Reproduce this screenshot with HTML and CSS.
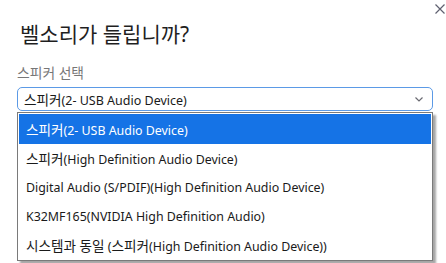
FILE: index.html
```html
<!DOCTYPE html>
<html lang="ko">
<head>
    <meta charset="UTF-8">
    <meta name="viewport" content="width=device-width, initial-scale=1.0">
    <title>벨소리가 들립니까?</title>

    <link rel="stylesheet" href="styles.css">
</head>
<body>
    <div class="dialog">
        <div class="topbar">
            <button class="close" aria-label="닫기">
                <svg width="10" height="10" viewBox="0 0 10 10">
                    <path d="M0.5 0.5 L9.5 9.5 M9.5 0.5 L0.5 9.5" stroke="#5f6070" stroke-width="1.2" fill="none"/>
                </svg>
            </button>
        </div>

        <h1 class="title">벨소리가 들립니까?</h1>

        <div class="label">스피커 선택</div>

        <div class="select">
            <span class="select-text"><span class="ko">스피커</span>(2- USB Audio Device)</span>
            <svg class="chevron" width="8" height="5" viewBox="0 0 8 5">
                <path d="M0.5 0.5 L4 4 L7.5 0.5" stroke="#6a6a72" stroke-width="1.2" fill="none"/>
            </svg>
        </div>

        <ul class="options">
            <li class="option selected"><span class="ko">스피커</span>(2- USB Audio Device)</li>
            <li class="option"><span class="ko">스피커</span>(High Definition Audio Device)</li>
            <li class="option">Digital Audio (S/PDIF)(High Definition Audio Device)</li>
            <li class="option">K32MF165(NVIDIA High Definition Audio)</li>
            <li class="option"><span class="ko">시스템과 동일</span> (<span class="ko">스피커</span>(High Definition Audio Device))</li>
        </ul>
    </div>
</body>
</html>
```

FILE: styles.css
```css
*{
    box-sizing: border-box;
    font-family: "Noto Sans", "Noto Sans CJK KR", sans-serif;
}
body{
    margin: 0;
    background-color: #ffffff;
}
.dialog{
    width: 446px;
    height: 263px;
    padding: 0 10px 0 17px;
    overflow: hidden;
}
.topbar{
    display: flex;
    justify-content: flex-end;
    height: 16px;
    padding-top: 4px;
    margin-right: -9px;
}
.close{
    border: none;
    background: none;
    padding: 0;
    width: 10px;
    height: 10px;
    display: flex;
}
.title{
    margin: 4px 0 0 3px;
    font-size: 21px;
    font-weight: normal;
    color: #1f1f1f;
    line-height: 28px;
}
.label{
    margin-top: 16px;
    font-size: 13.8px;
    color: #777777;
    line-height: 18px;
}
.select{
    margin-top: 5px;
    width: 416px;
    height: 24px;
    border: 1px solid #5b9ae6;
    border-radius: 5px;
    display: flex;
    align-items: center;
    justify-content: space-between;
    padding: 0 9px 0 6px;
}
.select-text{
    font-size: 12.5px;
    color: #1a1a1a;
}
.ko{
    font-size: 13.6px;
}
.options{
    list-style: none;
    margin: 1px 0 0 0;
    padding: 1px 1px 0 1px;
    width: 416px;
    border: 1px solid #7a7a7a;
    background-color: #ffffff;
    box-shadow: 3px 3px 2px rgba(0, 0, 0, 0.35);
}
.option{
    height: 29px;
    line-height: 29px;
    padding-left: 7px;
    font-size: 12.4px;
    color: #1a1a1a;
    white-space: nowrap;
}
.option.selected{
    height: 30px;
    line-height: 31px;
    background-color: #1573e6;
    color: #ffffff;
}
```
